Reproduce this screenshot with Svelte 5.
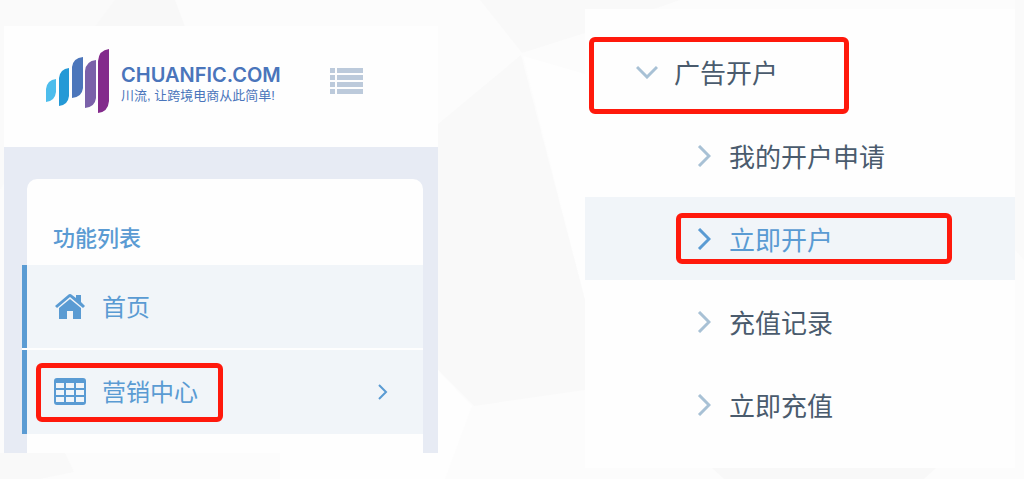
<script lang="ts">
  type AdItem = { label: string; active?: boolean };

  const adItems: AdItem[] = [
    { label: '我的开户申请' },
    { label: '立即开户', active: true },
    { label: '充值记录' },
    { label: '立即充值' }
  ];

  let expanded = $state(true);
</script>

<svelte:head>
  <title>CHUANFIC.COM</title>
</svelte:head>

<svg class="backdrop" viewBox="0 0 1024 479" preserveAspectRatio="none" aria-hidden="true">
  <rect width="1024" height="479" fill="#fcfcfc" />
  <path d="M0 0H115L85 40L0 190Z" fill="#fafafa" />
  <path d="M115 0H175L190 40H85Z" fill="#f8f8f8" />
  <path d="M480 0H680L585 33L522 53Z" fill="#f9f9f9" />
  <path d="M523 56L585 74V300Z" fill="#fefefe" />
  <path d="M521 55L585 300V390L474 406L438 370V124Z" fill="#f9f9f9" />
  <path d="M438 370L472 406L445 479H280V453H438Z" fill="#fefefe" />
  <path d="M0 453H65L74 472L40 479H0Z" fill="#f9f9f9" />
  <path d="M712 468H936L924 479H724Z" fill="#f8f8f8" />
  <path d="M1015 0H1024V260L1015 250Z" fill="#fafafa" />
</svg>

<main class="page">
  <section class="site" aria-label="川流">
    <header class="topbar">
      <a class="brand" href="#home">
        <svg class="logo" viewBox="0 0 64 64" aria-hidden="true">
          <path d="M0 53V40Q1 31 10 30V43Q9 52 0 53Z" fill="#4dbdec" />
          <path d="M13 57V29Q14 20 23 19V47Q22 56 13 57Z" fill="#2499d6" />
          <path d="M26 49V18Q27 9 37 8V39Q36 48 26 49Z" fill="#4c76bb" />
          <path d="M39 59V22Q40 12 50 11V49Q49 58 39 59Z" fill="#7a61a9" />
          <path d="M52 64V12Q53 1 63 0V52Q62 63 52 64Z" fill="#832b8c" />
        </svg>
        <span class="brand-text">
          <span class="brand-name">CHUANFIC.COM</span>
          <span class="tagline">川流, 让跨境电商从此简单!</span>
        </span>
      </a>
      <button class="toggle" type="button" aria-label="菜单">
        <svg viewBox="0 0 33 26" aria-hidden="true">
          <path
            d="M0 0h5v5H0zM7 0h26v5H7zM0 7h5v5H0zM7 7h26v5H7zM0 14h5v5H0zM7 14h26v5H7zM0 21h5v5H0zM7 21h26v5H7z"
            fill="#bccadb"
          />
        </svg>
      </button>
    </header>

    <div class="canvas">
      <nav class="sidebar" aria-labelledby="sidebar-title">
        <h2 id="sidebar-title">功能列表</h2>
        <a class="side-link" href="#home">
          <span class="side-label">
            <svg class="side-icon" viewBox="0 0 32 28" aria-hidden="true">
              <path
                d="M1 14L14 3Q16 1 18 3L22 6V3H27V10L31 14L29 16L16 5L3 16ZM16 7L27 16V27H19V19H13V27H5V16Z"
                fill="currentColor"
              />
            </svg>
            首页
          </span>
        </a>
        <a class="side-link" href="#marketing">
          <span class="side-label marked">
            <svg class="side-icon" viewBox="0 0 32 28" aria-hidden="true">
              <path
                fill-rule="evenodd"
                d="M3 1H29Q32 1 32 4V25Q32 28 29 28H3Q0 28 0 25V4Q0 1 3 1ZM2 6V11H10V6ZM12 6V11H20V6ZM22 6V11H30V6ZM2 13V18H10V13ZM12 13V18H20V13ZM22 13V18H30V13ZM2 20V25H10V20ZM12 20V25H20V20ZM22 20V25H30V20Z"
                fill="currentColor"
              />
            </svg>
            营销中心
          </span>
          <svg class="more" viewBox="0 0 10 16" aria-hidden="true">
            <path d="M1 1L8 8L1 15" />
          </svg>
        </a>
      </nav>
    </div>
  </section>

  <nav class="ads" aria-label="广告开户">
    <button
      class="group marked"
      type="button"
      aria-expanded={expanded}
      onclick={() => (expanded = !expanded)}
    >
      <svg class="down" viewBox="0 0 22 14" aria-hidden="true">
        <path d="M1 2L11 12L21 2" />
      </svg>
      广告开户
    </button>
    {#if expanded}
      <ul>
        {#each adItems as item}
          <li class:active={item.active}>
            <a class="ad-link" class:marked={item.active} href="#ads">
              <svg class="right" viewBox="0 0 14 22" aria-hidden="true">
                <path d="M2 1L12 11L2 21" />
              </svg>
              {item.label}
            </a>
          </li>
        {/each}
      </ul>
    {/if}
  </nav>
</main>

<style>
  :global(body) {
    margin: 0;
    background: #fcfcfc;
    font-family: "Liberation Sans", "Noto Sans CJK SC", sans-serif;
  }

  .backdrop {
    position: absolute;
    inset: 0;
    z-index: -1;
    width: 100%;
    height: 100%;
  }

  .page {
    display: grid;
    grid-template-columns: 434fr 430fr;
    gap: 147px;
    align-items: start;
    padding: 9px 9px 0 4px;
  }

  a {
    color: inherit;
    text-decoration: none;
  }

  button {
    border: 0;
    background: none;
    cursor: pointer;
    font: inherit;
  }

  svg {
    display: block;
    flex: none;
  }

  .site {
    margin-top: 17px;
    background: #fefefe;
  }

  .topbar {
    display: flex;
    align-items: center;
    gap: 49px;
    padding: 23px 42px 34px;
  }

  .brand {
    display: flex;
    align-items: center;
    gap: 11px;
  }

  .logo {
    width: 64px;
    height: 64px;
  }

  .brand-text {
    display: grid;
    width: 160px;
    padding-top: 6px;
    color: #4a75bb;
    white-space: nowrap;
  }

  .brand-name {
    font-family: Inter, sans-serif;
    font-size: 20px;
    font-weight: 600;
    line-height: 24px;
  }

  .tagline {
    font-size: 13px;
    line-height: 18px;
  }

  .toggle {
    padding: 0;
  }

  .toggle svg {
    width: 33px;
    height: 26px;
  }

  .canvas {
    padding: 32px 15px 0 18px;
    background: #e7ebf4;
  }

  .sidebar {
    color: #5a9bd3;
  }

  .sidebar::after {
    content: "";
    display: block;
    height: 19px;
    margin-left: 5px;
    background: #fefefe;
  }

  h2 {
    margin: 0 0 0 5px;
    padding: 43px 26px 9px;
    border-radius: 10px 10px 0 0;
    background: #fefefe;
    font-size: 22px;
    font-weight: 500;
    line-height: 34px;
  }

  .side-link {
    display: flex;
    align-items: center;
    justify-content: space-between;
    height: 84px;
    padding: 0 35px 0 9px;
    border-left: 5px solid #5a9bd3;
    background: #f1f5f9;
  }

  .side-link + .side-link {
    margin-top: 1px;
    box-shadow: 0 -2px #fefefe;
  }

  .side-label {
    display: flex;
    align-items: center;
    gap: 16px;
    box-sizing: border-box;
    height: 59px;
    padding: 0 20px 3px 13px;
    border: 5px solid transparent;
    font-size: 24px;
  }

  .side-icon {
    width: 32px;
    height: 28px;
  }

  .more {
    width: 10px;
    height: 16px;
  }

  .more path,
  .down path,
  .right path {
    fill: none;
    stroke: currentColor;
    stroke-width: 2;
  }

  .ads {
    padding: 28px 0 22px;
    background: #fefefe;
    color: #4a5b6d;
    font-size: 26px;
  }

  .group {
    display: flex;
    align-items: center;
    gap: 16px;
    box-sizing: border-box;
    width: 260px;
    height: 77px;
    margin-left: 4px;
    padding: 0 0 8px 42px;
    color: inherit;
  }

  .down {
    width: 22px;
    height: 14px;
    color: #a8c1d5;
  }

  .right {
    width: 14px;
    height: 22px;
    color: #a8c1d5;
  }

  .down path,
  .right path {
    stroke-width: 3;
  }

  ul {
    margin: 0;
    padding: 0;
    list-style: none;
  }

  li {
    display: flex;
    align-items: center;
    height: 83px;
    padding: 0 63px 0 91px;
  }

  .ad-link {
    display: flex;
    flex: 1;
    align-items: center;
    gap: 18px;
    box-sizing: border-box;
    height: 51px;
    padding-left: 16px;
    border: 5px solid transparent;
  }

  .active {
    background: #f1f5f9;
    color: #5a9bd3;
  }

  .active .right {
    color: inherit;
  }

  .marked {
    border: 5px solid #ff190c;
    border-radius: 6px;
  }
</style>
